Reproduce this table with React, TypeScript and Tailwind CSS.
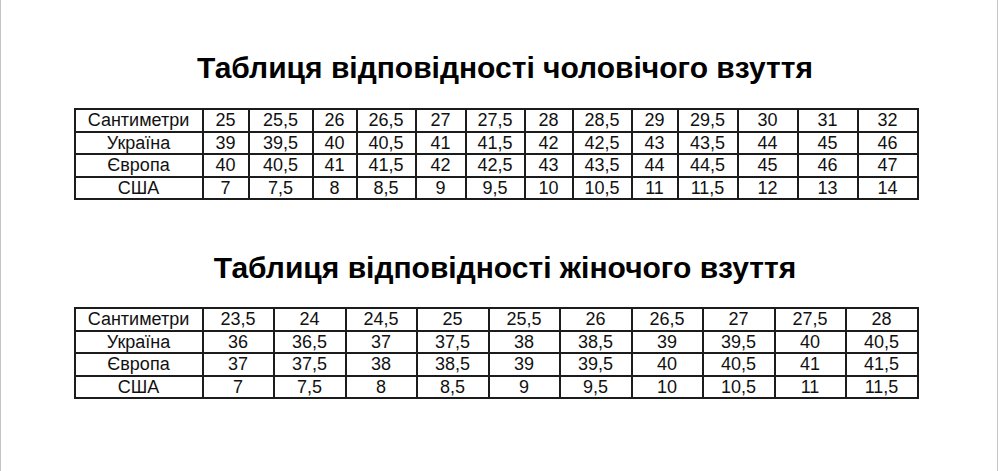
const men = {
  widths: [128, 46, 64, 44, 59, 50, 59, 48, 59, 46, 60, 60, 60, 60],
  rows: [
    ["Сантиметри", "25", "25,5", "26", "26,5", "27", "27,5", "28", "28,5", "29", "29,5", "30", "31", "32"],
    ["Україна", "39", "39,5", "40", "40,5", "41", "41,5", "42", "42,5", "43", "43,5", "44", "45", "46"],
    ["Європа", "40", "40,5", "41", "41,5", "42", "42,5", "43", "43,5", "44", "44,5", "45", "46", "47"],
    ["США", "7", "7,5", "8", "8,5", "9", "9,5", "10", "10,5", "11", "11,5", "12", "13", "14"],
  ],
};

const women = {
  widths: [128, 71, 72, 71, 72, 71, 72, 71, 72, 71, 72],
  rows: [
    ["Сантиметри", "23,5", "24", "24,5", "25", "25,5", "26", "26,5", "27", "27,5", "28"],
    ["Україна", "36", "36,5", "37", "37,5", "38", "38,5", "39", "39,5", "40", "40,5"],
    ["Європа", "37", "37,5", "38", "38,5", "39", "39,5", "40", "40,5", "41", "41,5"],
    ["США", "7", "7,5", "8", "8,5", "9", "9,5", "10", "10,5", "11", "11,5"],
  ],
};

function SizeTable({ widths, rows }: { widths: number[]; rows: string[][] }) {
  return (
    <table className="border-collapse border-2 border-[#1c1c1c] table-fixed text-[18px] leading-[20px] text-[#111]">
      <colgroup>
        {widths.map((w, i) => (
          <col key={i} style={{ width: w }} />
        ))}
      </colgroup>
      <tbody>
        {rows.map((row, r) => (
          <tr key={r}>
            {row.map((cell, c) => (
              <td key={c} className="border-2 border-[#1c1c1c] p-0 h-[22.5px] text-center">
                {cell}
              </td>
            ))}
          </tr>
        ))}
      </tbody>
    </table>
  );
}

export default function App() {
  return (
    <div className="w-[998px] h-[471px] bg-white border-l border-r border-[#c4c4c4] font-['Liberation_Sans',Arial,sans-serif]">
      <div className="flex flex-col items-center pt-[50px]">
        <h2 className="text-[30px] leading-[36px] font-bold text-black pl-[12px]">
          Таблиця відповідності чоловічого взуття
        </h2>
        <div className="mt-[22px] pr-[6px]">
          <SizeTable {...men} />
        </div>
        <h2 className="mt-[50px] text-[30px] leading-[36px] font-bold text-black pl-[12px]">
          Таблиця відповідності жіночого взуття
        </h2>
        <div className="mt-[21px] pr-[6px]">
          <SizeTable {...women} />
        </div>
      </div>
    </div>
  );
}
